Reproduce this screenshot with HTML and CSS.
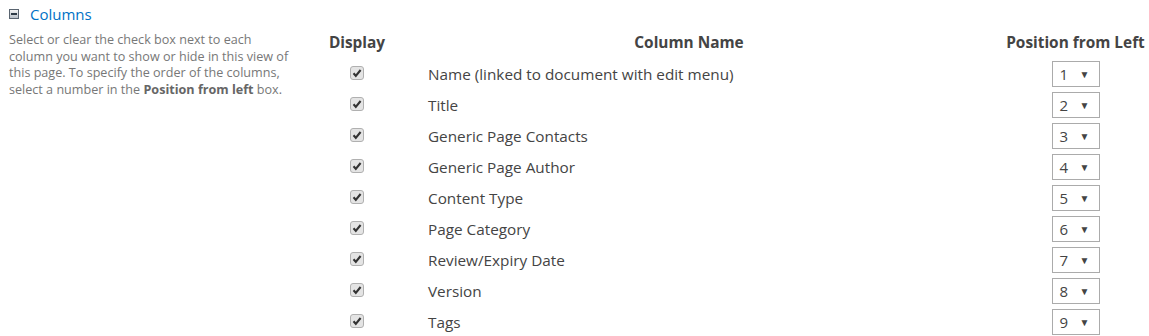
FILE: index.html
```html
<!DOCTYPE html>
<html lang="en">
<head>
  <meta charset="UTF-8" />
  <title>Columns</title>
  <link rel="stylesheet" href="styles.css">
</head>
<body>

<div class="section-title">
  <span class="toggle"><span class="toggle-bar"></span></span>
  <span class="title-text">Columns</span>
</div>

<div class="section-body">
  <div class="description">
    Select or clear the check box next to each column you want to show or hide in this view of this page. To specify the order of the columns, select a number in the <b>Position from left</b> box.
  </div>

  <table class="columns-table">
    <thead>
      <tr>
        <th class="col-display">Display</th>
        <th class="col-name">Column Name</th>
        <th class="col-pos">Position from Left</th>
      </tr>
    </thead>
    <tbody id="rows"></tbody>
  </table>
</div>

<script>
  const names = [
    'Name (linked to document with edit menu)',
    'Title',
    'Generic Page Contacts',
    'Generic Page Author',
    'Content Type',
    'Page Category',
    'Review/Expiry Date',
    'Version',
    'Tags'
  ];
  const check = '<svg width="14" height="14" viewBox="0 0 14 14"><rect x="0.5" y="0.5" width="13" height="13" rx="2.5" fill="#e4e4e4" stroke="#b0b0b0"/><path d="M3.5 7.3 L5.8 9.8 L10.6 4" fill="none" stroke="#333" stroke-width="2.1"/></svg>';
  const body = document.getElementById('rows');
  names.forEach((n, i) => {
    const tr = document.createElement('tr');
    tr.innerHTML =
      '<td class="col-display"><span class="check">' + check + '</span></td>' +
      '<td class="col-name">' + n + '</td>' +
      '<td class="col-pos"><span class="pos-select"><span class="pos-num">' + (i + 1) + '</span><span class="pos-arrow">&#9660;</span></span></td>';
    body.appendChild(tr);
  });
</script>

</body>
</html>
```

FILE: styles.css
```css
body {
  margin: 0;
  font-family: "Open Sans", "Noto Sans", sans-serif;
  background: #fff;
  color: #444;
}

.section-title {
  display: flex;
  align-items: center;
  height: 28px;
  padding-left: 9px;
}

.toggle {
  width: 8px;
  height: 8px;
  border: 1px solid #5a6470;
  background: linear-gradient(#f4f4f4, #b9c0c8);
  display: flex;
  align-items: center;
  justify-content: center;
  margin-right: 11px;
}

.toggle-bar {
  width: 6px;
  height: 2px;
  background: #2e3a46;
}

.title-text {
  color: #0072c6;
  font-size: 15px;
}

.section-body {
  display: flex;
  align-items: flex-start;
}

.description {
  width: 290px;
  box-sizing: border-box;
  padding-left: 9px;
  padding-top: 4px;
  font-size: 12.6px;
  line-height: 16.7px;
  color: #777;
  margin-right: 30px;
}

.description b {
  color: #666;
}

.columns-table {
  border-collapse: collapse;
  width: 829px;
}

.columns-table th {
  height: 30px;
  font-size: 15.4px;
  line-height: 20px;
  font-weight: bold;
  color: #444;
  text-align: center;
  padding: 0;
}

.columns-table tbody tr {
  height: 31px;
}

.columns-table td {
  padding: 0;
  font-size: 15.3px;
  line-height: 20px;
  color: #444;
}

.col-display {
  width: 74px;
  text-align: center;
}

.columns-table th.col-name {
  width: 590px;
}

.columns-table td.col-name {
  padding-left: 34px;
}

.columns-table .col-pos {
  padding-left: 18px;
  text-align: center;
}

.check {
  display: inline-block;
  width: 14px;
  height: 14px;
  vertical-align: middle;
  position: relative;
  top: -2px;
}

.check svg {
  display: block;
}

.pos-select {
  display: inline-flex;
  align-items: center;
  justify-content: space-between;
  box-sizing: border-box;
  width: 48px;
  height: 26px;
  border: 1px solid #ababab;
  padding: 0 9px 0 7px;
  font-size: 15px;
  color: #444;
  vertical-align: middle;
}

.pos-arrow {
  font-size: 10px;
  color: #444;
}
```
